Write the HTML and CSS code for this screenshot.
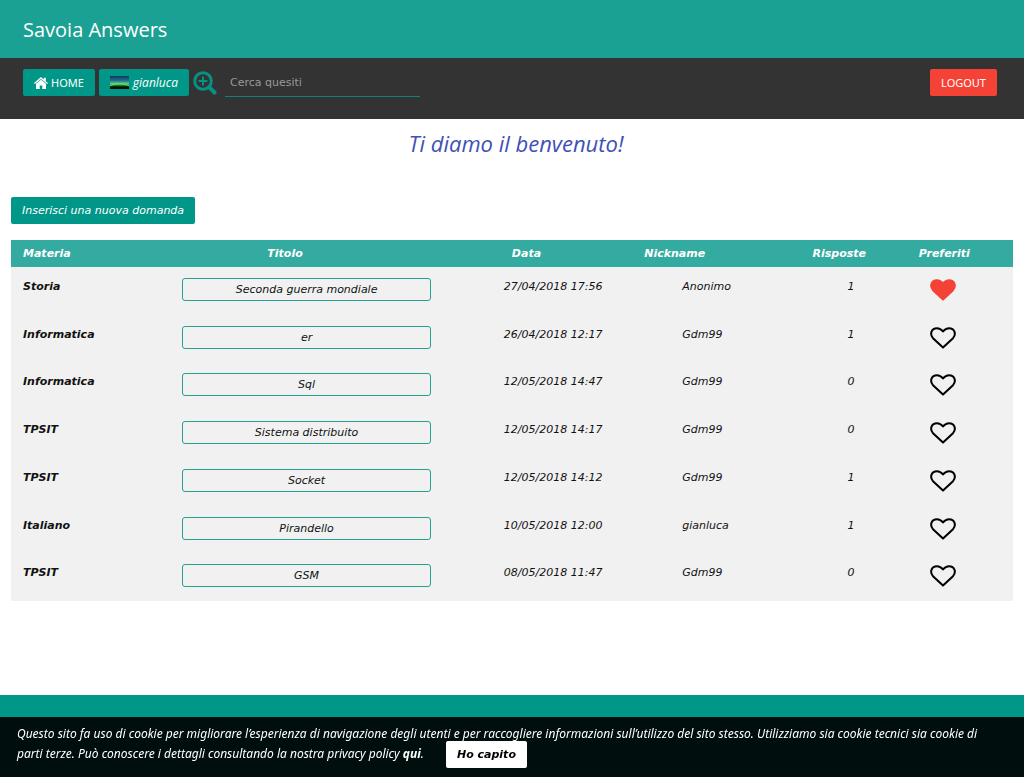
FILE: index.html
```html
<!DOCTYPE html>
<html lang="it">
<head>
<meta charset="utf-8">
<title>Savoia Answers</title>
<link rel="stylesheet" href="styles.css">
</head>
<body>
<svg class="sprite" aria-hidden="true">
  <symbol id="heart" viewBox="0 0 26 22"><path d="M13 20.600 3 11.200C-.6 7 1.400 1.200 7 1.200c3 0 4.800 1.800 6 3.300 1.200-1.500 3-3.300 6-3.300 5.600 0 7.600 5.800 4 10Z"/></symbol>
</svg>
<header class="banner"><h1 class="site-name">Savoia Answers</h1></header>
<nav class="navbar">
  <a class="btn" href="#"><svg class="icon-home" viewBox="0 0 14 12"><path d="M7 0 9.800 2.400V.8h2v3.400L14 6.100l-.8 1L7 2.100.8 7.100 0 6.100Z"/><path d="M7 2.700 12 6.800V12H8.300V8.500H5.700V12H2V6.800Z"/></svg>HOME</a>
  <a class="btn user" href="#"><svg class="avatar" viewBox="0 0 19 13"><defs><linearGradient id="sky" x1="0" y1="0" x2="0" y2="1"><stop offset="0" stop-color="#0b3a5c"/><stop offset=".35" stop-color="#22708f"/><stop offset=".58" stop-color="#55c98a"/><stop offset=".74" stop-color="#19732c"/><stop offset=".84" stop-color="#001004"/></linearGradient></defs><rect width="19" height="13" fill="url(#sky)"/><path d="M0 9.500Q9 6 19 9.500" fill="none" stroke="#70e85a"/></svg>gianluca</a>
  <button class="search-btn" type="button" aria-label="Cerca"><svg viewBox="0 0 24 24"><circle cx="10" cy="10" r="8.300"/><path class="handle" d="m16.500 16.500 5 5"/><path class="plus" d="M10 5.500v9M5.500 10h9"/></svg></button>
  <input class="search" type="text" placeholder="Cerca quesiti" aria-label="Cerca quesiti">
  <a class="btn logout" href="#">LOGOUT</a>
</nav>
<main class="content">
  <h2 class="welcome">Ti diamo il benvenuto!</h2>
  <button class="btn ask" type="button">Inserisci una nuova domanda</button>
  <table class="questions">
    <thead><tr><th class="subject">Materia</th><th class="title">Titolo</th><th class="date">Data</th><th class="nick">Nickname</th><th class="replies">Risposte</th><th class="fav">Preferiti</th></tr></thead>
    <tbody>
      <tr><th scope="row">Storia</th><td><button class="question" type="button">Seconda guerra mondiale</button></td><td class="date">27/04/2018 17:56</td><td class="nick">Anonimo</td><td class="replies">1</td><td class="fav"><button class="heart on" type="button" aria-label="Preferito"><svg viewBox="0 0 26 22"><use href="#heart"/></svg></button></td></tr>
      <tr><th scope="row">Informatica</th><td><button class="question" type="button">er</button></td><td class="date">26/04/2018 12:17</td><td class="nick">Gdm99</td><td class="replies">1</td><td class="fav"><button class="heart" type="button" aria-label="Preferito"><svg viewBox="0 0 26 22"><use href="#heart"/></svg></button></td></tr>
      <tr><th scope="row">Informatica</th><td><button class="question" type="button">Sql</button></td><td class="date">12/05/2018 14:47</td><td class="nick">Gdm99</td><td class="replies">0</td><td class="fav"><button class="heart" type="button" aria-label="Preferito"><svg viewBox="0 0 26 22"><use href="#heart"/></svg></button></td></tr>
      <tr><th scope="row">TPSIT</th><td><button class="question" type="button">Sistema distribuito</button></td><td class="date">12/05/2018 14:17</td><td class="nick">Gdm99</td><td class="replies">0</td><td class="fav"><button class="heart" type="button" aria-label="Preferito"><svg viewBox="0 0 26 22"><use href="#heart"/></svg></button></td></tr>
      <tr><th scope="row">TPSIT</th><td><button class="question" type="button">Socket</button></td><td class="date">12/05/2018 14:12</td><td class="nick">Gdm99</td><td class="replies">1</td><td class="fav"><button class="heart" type="button" aria-label="Preferito"><svg viewBox="0 0 26 22"><use href="#heart"/></svg></button></td></tr>
      <tr><th scope="row">Italiano</th><td><button class="question" type="button">Pirandello</button></td><td class="date">10/05/2018 12:00</td><td class="nick">gianluca</td><td class="replies">1</td><td class="fav"><button class="heart" type="button" aria-label="Preferito"><svg viewBox="0 0 26 22"><use href="#heart"/></svg></button></td></tr>
      <tr><th scope="row">TPSIT</th><td><button class="question" type="button">GSM</button></td><td class="date">08/05/2018 11:47</td><td class="nick">Gdm99</td><td class="replies">0</td><td class="fav"><button class="heart" type="button" aria-label="Preferito"><svg viewBox="0 0 26 22"><use href="#heart"/></svg></button></td></tr>
    </tbody>
  </table>
</main>
<footer class="footer"></footer>
<div class="cookies">Questo sito fa uso di cookie per migliorare l’esperienza di navigazione degli utenti e per raccogliere informazioni sull’utilizzo del sito stesso. Utilizziamo sia cookie tecnici sia cookie di parti terze. Può conoscere i dettagli consultando la nostra privacy policy <a href="#">qui</a>. <button class="accept" type="button">Ho capito</button></div>
</body>
</html>
```
FILE: styles.css
```css
* { box-sizing: border-box; }
body {
  margin: 0;
  min-height: 100vh;
  display: flex;
  flex-direction: column;
  background: #fff;
  color: #111;
  font: italic 11px/17px Verdana, "DejaVu Sans", sans-serif;
}
button, input { font: inherit; color: inherit; }
button { border: 0; cursor: pointer; }
.sprite { position: absolute; width: 0; height: 0; }
.banner { padding: 15px 23px 14px; background: #1aa193; color: #fff; }
.site-name { margin: 0; font: normal 20px/29px "Segoe UI", "Open Sans", sans-serif; }
.navbar {
  display: flex;
  align-items: flex-start;
  padding: 11px 27px 22px 23px;
  background: #333;
  font-family: "Segoe UI", "Noto Sans", sans-serif;
}
.btn {
  display: inline-flex;
  align-items: center;
  height: 27px;
  padding: 0 11px;
  border-radius: 2px;
  background: #009688;
  color: #fff;
  text-decoration: none;
  font-style: normal;
}
.icon-home { width: 14px; height: 12px; margin-right: 3px; fill: #fff; }
.user { margin-left: 4px; font-family: "Open Sans", sans-serif; font-style: italic; font-size: 12px; }
.avatar { width: 19px; height: 13px; margin-right: 4px; }
.search-btn { width: 24px; height: 26px; margin: 1px 8px 0 4px; padding: 0; background: none; }
.search-btn svg { display: block; width: 24px; height: 24px; fill: none; stroke: #069184; stroke-width: 3; }
.search-btn .handle { stroke-width: 4; stroke-linecap: round; }
.search-btn .plus { stroke-width: 2; }
.search {
  width: 195px;
  height: 28px;
  padding: 0 5px;
  border: 0;
  border-bottom: 1px solid #168074;
  outline: 0;
  background: none;
  color: #fff;
  font: normal 11px/17px "DejaVu Sans", sans-serif;
}
.search::placeholder { color: #999; opacity: 1; }
.logout { margin-left: auto; background: #f44336; }
.content { padding: 7px 11px 60px; }
.welcome {
  margin: 0 0 37px;
  padding-left: 8px;
  color: #3f51b5;
  font: italic 22px/34px "Comic Sans MS", "Open Sans", sans-serif;
  text-align: center;
}
.ask { font-style: italic; }
.questions {
  width: 100%;
  height: 361px;
  margin-top: 16px;
  border-collapse: collapse;
  table-layout: fixed;
  background: #f1f1f1;
}
.questions thead tr { height: 27px; background: #33aba0; color: #fff; }
.questions th, .questions td { padding: 11px; text-align: left; vertical-align: top; }
.questions thead th { padding-top: 5px; padding-bottom: 5px; }
.questions .subject, .questions th[scope] { padding-left: 12px; }
thead .subject { width: 16%; }
thead .title { width: 27%; }
thead .date { width: 19%; }
thead .nick { width: 17%; }
thead .replies { width: 10%; }
.questions .title { padding-left: 96px; }
.questions th.date { padding-left: 70px; }
.questions td.date { padding-left: 62px; }
.questions td.nick { padding-left: 50px; }
.questions th.nick { padding-left: 12px; }
.questions th.replies { padding-left: 10px; }
.questions td.replies { padding-left: 45px; }
.questions th.fav { padding-left: 16px; }
.questions td.fav { padding-left: 27px; }
.question {
  display: block;
  width: 100%;
  height: 23px;
  padding: 0;
  border: 1px solid #26a094;
  border-radius: 3px;
  background: none;
}
.heart { display: block; margin-top: 1px; padding: 0; background: none; }
.heart svg { display: block; width: 26px; height: 22px; fill: none; stroke: #000; stroke-width: 2; stroke-linejoin: round; }
.heart.on svg { fill: #f44336; stroke: #f44336; }
.footer { height: 82px; margin-top: auto; background: #009688; }
.cookies {
  position: fixed;
  inset: auto 0 0 0;
  min-height: 60px;
  padding: 7px 27px 8px 17px;
  background: rgba(0, 0, 0, .9);
  color: #fff;
  font: italic 12px/20px "Noto Sans", sans-serif;
}
.cookies a { color: #fff; font-weight: bold; text-decoration: none; }
.accept {
  height: 27px;
  margin: -4px 0 -4px 19px;
  padding: 0 11px;
  border-radius: 2px;
  background: #fff;
  color: #000;
  font: italic bold 11px/17px Verdana, "DejaVu Sans", sans-serif;
}
```
